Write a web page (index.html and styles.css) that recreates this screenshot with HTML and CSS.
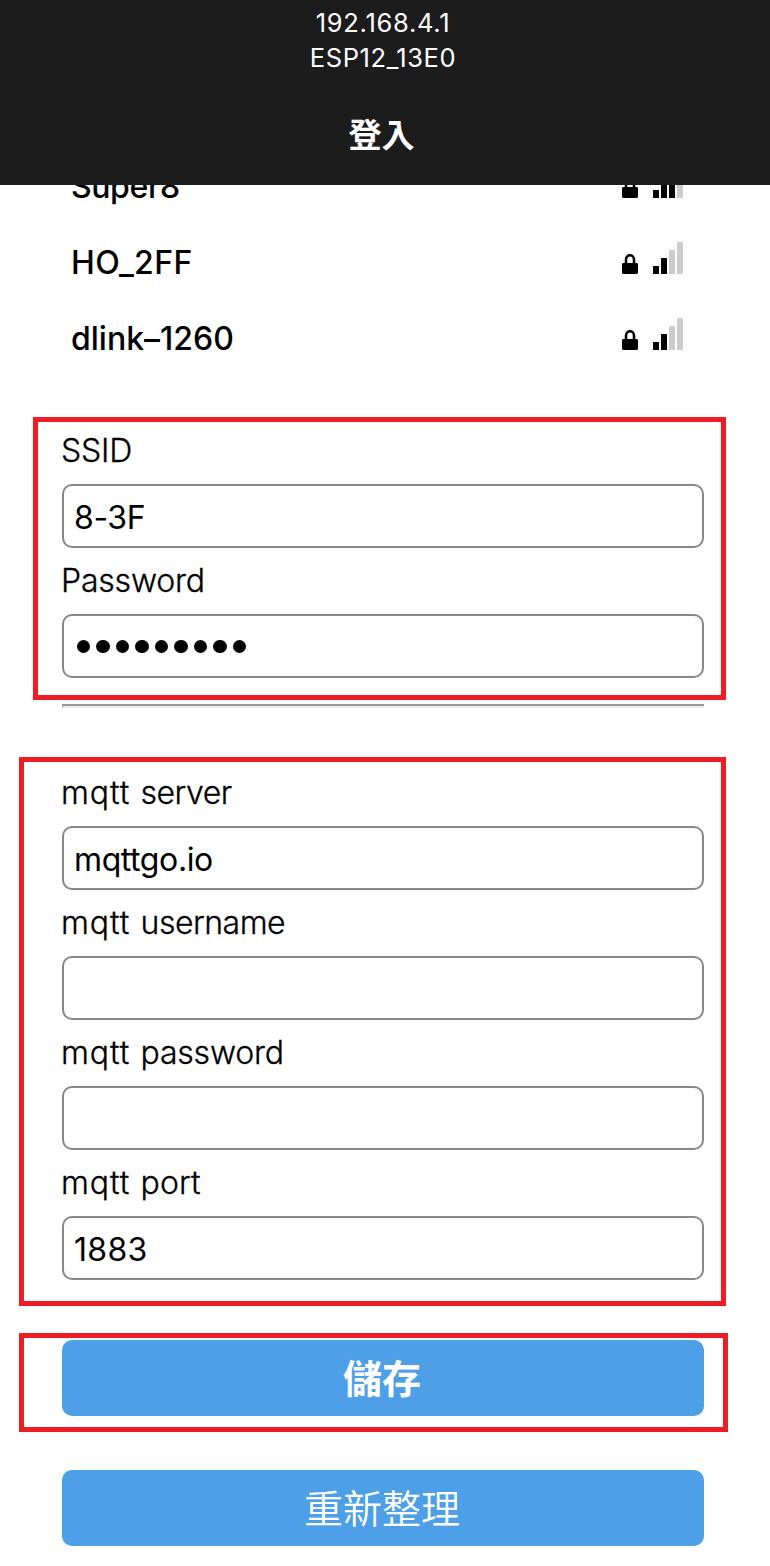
FILE: index.html
```html
<!DOCTYPE html>
<html lang="zh-Hant">
<head>
<meta charset="utf-8">
<title>登入</title>
<link rel="stylesheet" href="styles.css">
</head>
<body>
<svg width="0" height="0" class="defs">
  <symbol id="lock" viewBox="0 0 16 20"><path d="M4 10V5.8a4 4.6 0 0 1 8 0V10" fill="none" stroke="#000" stroke-width="2.5"/><rect y="9" width="16" height="11" rx="1.4"/></symbol>
</svg>
<header class="header">
  <p class="host ip">192.168.4.1</p>
  <p class="host esp">ESP12_13E0</p>
  <h1 class="title">登入</h1>
</header>
<main>
  <section class="networks">
    <div class="network"><span class="name super">Super8</span><svg class="lock"><use href="#lock"/></svg><span class="bars three"><i></i><i></i><i></i><i></i></span></div>
    <div class="network"><span class="name ho">HO_2FF</span><svg class="lock"><use href="#lock"/></svg><span class="bars"><i></i><i></i><i></i><i></i></span></div>
    <div class="network"><span class="name dlink">dlink–1260</span><svg class="lock"><use href="#lock"/></svg><span class="bars"><i></i><i></i><i></i><i></i></span></div>
  </section>
  <section class="frame wifi">
    <div class="field"><label for="ssid">SSID</label><input class="v-ssid" id="ssid" value="8-3F"></div>
    <div class="field"><label>Password</label><div class="input dots"><b></b><b></b><b></b><b></b><b></b><b></b><b></b><b></b><b></b></div></div>
  </section>
  <div class="divider"></div>
  <section class="frame mqtt">
    <div class="field"><label class="tight" for="server"><span class="prefix">mqtt </span>server</label><input class="v-server" id="server" value="mqttgo.io"></div>
    <div class="field"><label class="tight" for="user"><span class="prefix">mqtt </span>username</label><input id="user"></div>
    <div class="field"><label for="mpass"><span class="prefix">mqtt </span>password</label><input id="mpass"></div>
    <div class="field"><label class="loose" for="port"><span class="prefix">mqtt </span>port</label><input class="v-port" id="port" value="1883"></div>
  </section>
  <section class="frame save"><button class="button strong">儲存</button></section>
  <button class="button refresh">重新整理</button>
</main>
</body>
</html>
```
FILE: styles.css
```css
* { box-sizing: border-box; }
body { margin: 0; width: 770px; height: 1566px; overflow: hidden; background: #fff; color: #000; font-family: Inter, "Noto Sans CJK TC", sans-serif; }
.defs { position: absolute; }
.header { height: 185px; padding-top: 5px; background: #1c1c1c; color: #fff; text-align: center; }
.host { margin: 0; padding-right: 4px; font-size: 25.5px; line-height: 35px; }
.ip { letter-spacing: 0.7px; }
.esp { letter-spacing: 0.6px; }
.title { margin: 34px 0 0; padding-right: 7px; font: 700 33px/48px "Noto Sans CJK TC", sans-serif; }
.networks { height: 232px; overflow: hidden; display: flex; flex-direction: column; }
.network { height: 76px; flex: none; display: flex; align-items: center; padding: 0 87px 0 71px; }
.network:first-child { margin-top: -37px; }
.name { flex: 1; padding-top: 2px; font-size: 32px; font-weight: 500; line-height: 74px; }
.super { letter-spacing: -0.4px; }
.ho { letter-spacing: 0.4px; }
.lock { width: 16px; height: 20px; margin: 4px 15px 0 0; }
.bars { display: flex; align-items: flex-end; gap: 2px; height: 32px; margin-top: -8px; }
.bars i { width: 6px; height: 8px; background: #000; }
.bars i:nth-child(2) { height: 16px; }
.bars i:nth-child(3) { height: 24px; background: #ccc; }
.bars i:nth-child(4) { height: 32px; background: #ccc; }
.bars.three i:nth-child(3) { background: #000; }
.frame { border: 5px solid #ee1c24; }
.wifi, .mqtt { display: flex; flex-direction: column; gap: 10px; }
.wifi { width: 693px; height: 283px; margin-left: 33px; padding: 6px 17px 0 23px; }
.mqtt { width: 707px; height: 549px; margin: 49px 0 0 19px; padding: 8px 17px 0 37px; }
.field { display: flex; flex-direction: column; gap: 12px; }
.field input, .field .input { margin-left: 1px; }
label { font-size: 32px; line-height: 46px; height: 44px; font-weight: 300; white-space: nowrap; letter-spacing: -0.2px; -webkit-text-stroke: 0.3px #000; }
.tight { letter-spacing: -0.5px; }
.loose { letter-spacing: 0.1px; }
.prefix { letter-spacing: 0.9px; word-spacing: 0.5px; }
input, .input { width: 642px; height: 64px; border: 2px solid #888; border-radius: 10px; padding: 2px 10px 0; margin: 0; background: #fff; color: #000; font: 400 32px Inter, sans-serif; outline: none; }
.v-ssid, .v-server { letter-spacing: -0.4px; }
.v-port { letter-spacing: 0.3px; }
.field .dots { display: flex; align-items: center; gap: 6px; padding: 1px 0 0 12.5px; }
.dots b { width: 13.5px; height: 13.5px; border-radius: 50%; background: #000; }
.divider { width: 642px; height: 4px; margin: 4px 0 0 62px; border-top: 2px solid #999; border-left: 1px solid #aaa; background: #eee; }
.save { width: 709px; height: 99px; margin: 27px 0 0 19px; padding: 2px 0 0 38px; }
.button { display: block; width: 642px; height: 76px; padding: 0 2px 4px 0; border: 0; border-radius: 10px; background: #4d9fe7; color: #fff; font: 350 39px/72px "Noto Sans CJK TC", sans-serif; text-align: center; }
.strong { font-weight: 700; }
.refresh { margin: 38px 0 0 62px; }
```
